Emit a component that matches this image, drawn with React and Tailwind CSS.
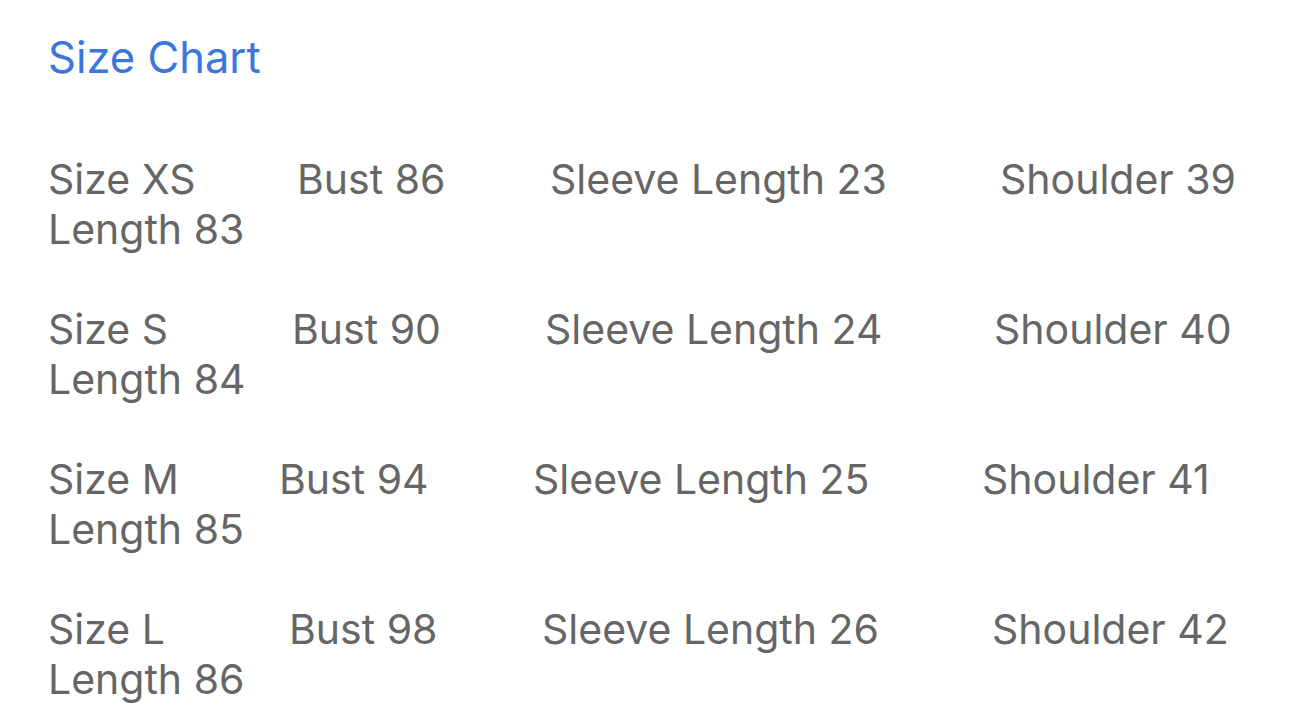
const rows = [
  { cells: ['Size XS', 'Bust 86', 'Sleeve Length 23', 'Shoulder 39'], widths: ['w-[249px]', 'w-[253px]', 'w-[450px]'], length: 'Length 83' },
  { cells: ['Size S', 'Bust 90', 'Sleeve Length 24', 'Shoulder 40'], widths: ['w-[244px]', 'w-[253px]', 'w-[449px]'], length: 'Length 84' },
  { cells: ['Size M', 'Bust 94', 'Sleeve Length 25', 'Shoulder 41'], widths: ['w-[231px]', 'w-[254px]', 'w-[449px]'], length: 'Length 85' },
  { cells: ['Size L', 'Bust 98', 'Sleeve Length 26', 'Shoulder 42'], widths: ['w-[241px]', 'w-[253px]', 'w-[450px]'], length: 'Length 86' },
]

export default function App() {
  return (
    <div className="w-[1290px] h-[727px] bg-white overflow-hidden pl-[48px] pt-[32px]" style={{ fontFamily: 'Inter, "Noto Sans", sans-serif' }}>
      <h1 className="text-[43.5px] leading-[50px] text-[#3a76dc] font-normal">Size Chart</h1>

      <div className="mt-[72px] flex flex-col gap-[50px] text-[41px] leading-[50px] text-[#666666]">
        {rows.map((row) => (
          <div key={row.length}>
            <div className="flex whitespace-nowrap">
              {row.cells.map((c, i) => (
                <span key={c} className={i < 3 ? row.widths[i] + ' shrink-0' : ''}>{c}</span>
              ))}
            </div>
            <div>{row.length}</div>
          </div>
        ))}
      </div>
    </div>
  )
}
